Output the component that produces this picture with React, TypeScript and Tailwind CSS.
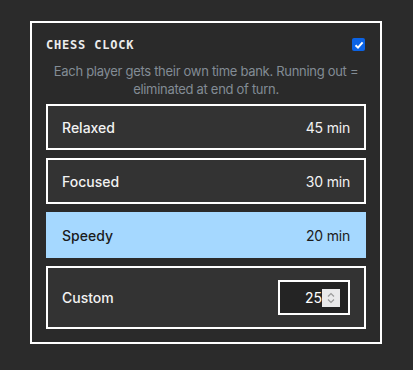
import React, { useState } from "react";

const options = [
  { label: "Relaxed", mins: 45 },
  { label: "Focused", mins: 30 },
  { label: "Speedy", mins: 20 },
];

function Spinner() {
  return (
    <span className="flex h-[18px] w-[18px] items-center justify-center bg-[#e9e9ea]">
      <svg width="10" height="14" viewBox="0 0 10 14" fill="none" stroke="#9a9a9a" strokeWidth="1.2">
        <path d="M2 5.5 L5 2.5 L8 5.5" />
        <path d="M2 8.5 L5 11.5 L8 8.5" />
      </svg>
    </span>
  );
}

export default function App() {
  const [selected, setSelected] = useState("Speedy");
  const [enabled, setEnabled] = useState(true);
  const [custom, setCustom] = useState("25");

  return (
    <div className="min-h-[370px] w-full bg-[#2b2b2b] pl-[30px] pt-[21px] font-['Inter',sans-serif]">
      <div className="w-[352px] border-2 border-white bg-[#2a2a2a] px-[14px] pb-[13px] pt-[14px]">
        <div className="flex h-[15px] items-center justify-between">
          <span className="font-['DejaVu_Sans_Mono',monospace] text-[12px] font-bold tracking-[0.8px] text-[#ececec]">
            CHESS CLOCK
          </span>
          <button
            onClick={() => setEnabled(!enabled)}
            className="mr-[1px] flex h-[13px] w-[13px] items-center justify-center rounded-[2px] bg-[#0b63e5]"
          >
            {enabled && (
              <svg width="10" height="10" viewBox="0 0 10 10" fill="none" stroke="white" strokeWidth="2">
                <path d="M1.5 5.2 L4 7.6 L8.6 2.4" />
              </svg>
            )}
          </button>
        </div>
        <p className="mt-[10px] text-center text-[13px] leading-[18px] tracking-[-0.3px] text-[#838c95]">
          Each player gets their own time bank. Running out = eliminated at end of turn.
        </p>
        <div className="mt-[6px] flex flex-col gap-2">
          {options.map((o) => {
            const active = selected === o.label;
            return (
              <button
                key={o.label}
                onClick={() => setSelected(o.label)}
                className={
                  active
                    ? "flex h-[46px] items-center justify-between bg-[#a5d8ff] px-4 text-[14px] font-medium text-[#1b1b1b]"
                    : "flex h-[46px] items-center justify-between border-2 border-white bg-[#333333] px-[14px] text-[14px] font-medium text-[#f2f2f2]"
                }
              >
                <span>{o.label}</span>
                <span className="font-normal tracking-[-0.2px]">{o.mins} min</span>
              </button>
            );
          })}
          <div className="flex h-[63px] items-center justify-between border-2 border-white bg-[#333333] pl-[14px] pr-[14px] text-[14px] font-medium text-[#f2f2f2]">
            <span>Custom</span>
            <div className="flex h-[35px] w-[72px] items-center justify-end border-2 border-white bg-[#242424] pr-[8px]">
              <input
                value={custom}
                onChange={(e) => setCustom(e.target.value)}
                className="w-[36px] bg-transparent text-right text-[14px] font-normal text-white outline-none"
              />
              <Spinner />
            </div>
          </div>
        </div>
      </div>
    </div>
  );
}
